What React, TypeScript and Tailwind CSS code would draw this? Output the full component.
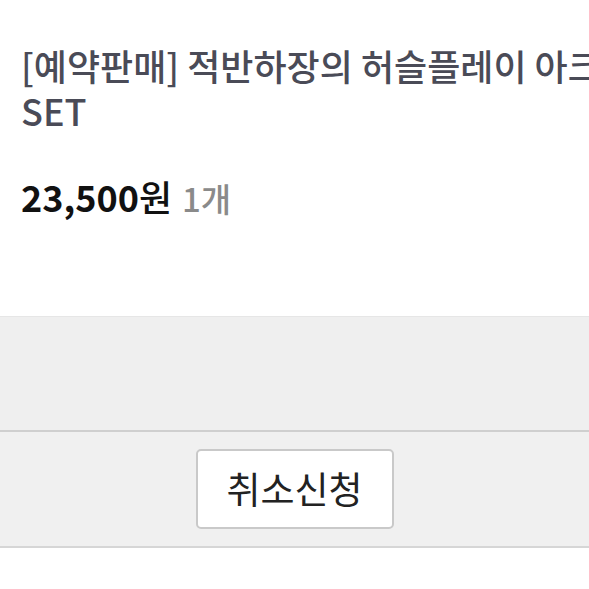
export default function App() {
  return (
    <div
      className="h-[589px] w-[589px] overflow-hidden bg-white"
      style={{ fontFamily: '"Noto Sans CJK KR", "Noto Sans", sans-serif' }}
    >
      {/* Product info */}
      <div className="h-[316px] px-[21px] pt-[43px]">
        <h1 className="whitespace-nowrap text-[36px] font-medium leading-[45px] text-[#4a4b57]">
          [예약판매] 적반하장의 허슬플레이 아크릴
          <br />
          SET
        </h1>
        <p className="mt-[41px] flex items-baseline whitespace-nowrap text-[36px] leading-[44px]">
          <span className="font-bold text-[#111]">23,500</span>
          <span className="font-medium text-[#111]">원</span>
          <span className="ml-[10px] text-[33px] font-medium text-[#8a8a8a]">1개</span>
        </p>
      </div>

      {/* Empty gray band */}
      <div className="h-[114px] border-t border-[#e6e6e6] bg-[#efefef]" />

      {/* Action bar */}
      <div className="flex h-[118px] items-center justify-center border-y-2 border-t-[#cfcfcf] border-b-[#d6d6d6] bg-[#f0f0f0]">
        <button className="flex h-[80px] w-[198px] items-center justify-center rounded-[5px] border-2 border-[#c9c9c9] bg-white text-[37px] text-[#222]">
          취소신청
        </button>
      </div>
    </div>
  );
}
